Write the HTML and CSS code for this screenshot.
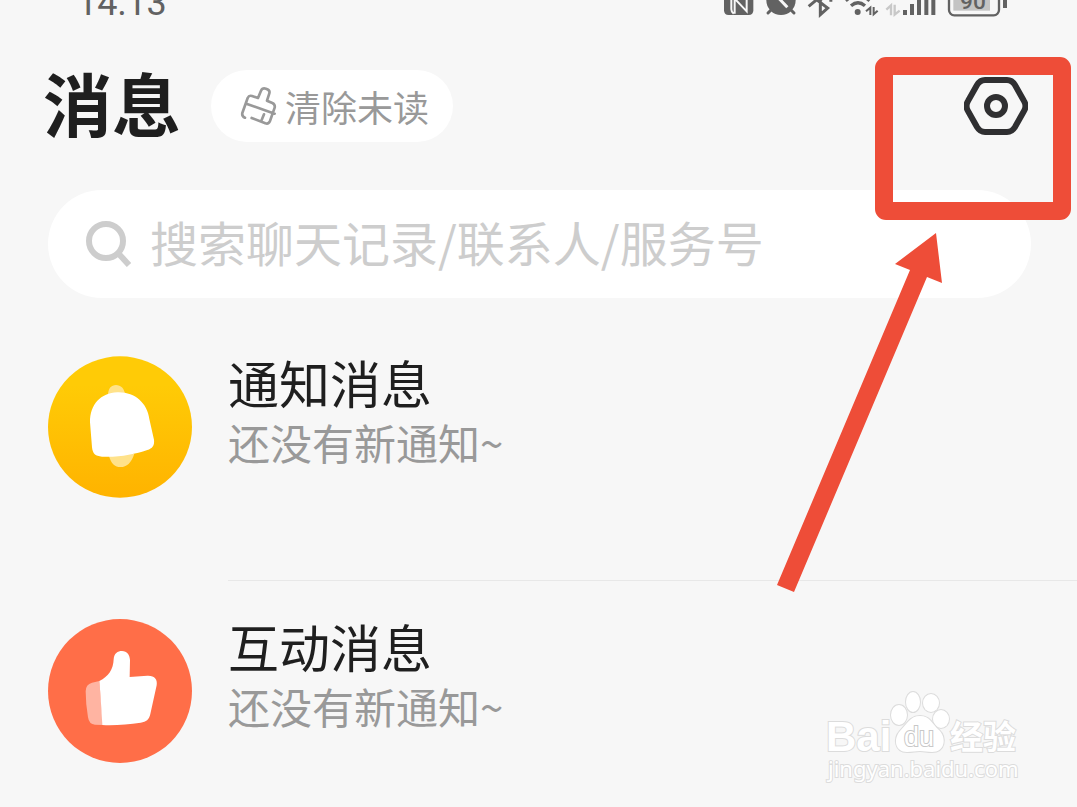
FILE: index.html
```html
<!DOCTYPE html>
<html lang="zh-CN">

<head>
    <meta charset="UTF-8">
    <meta name="viewport" content="width=device-width, initial-scale=1.0">
    <title>消息</title>
    <link rel="stylesheet" href="styles.css">
</head>

<body>
    <div class="status">
        <span class="time">14:13</span>
        <svg class="status-icons" viewBox="0 0 960 63" aria-hidden="true">
            <!-- nfc -->
            <path d="M72-20h88v51q0 14-14 14H86q-14 0-14-14z" fill="#626262" />
            <path d="M94-20V28q0 8 7 13M104 41V-4l36 38V-20" fill="none" stroke="#f7f7f7" stroke-width="6" />
            <!-- alarm -->
            <circle cx="243" cy="1" r="44" fill="#626262" />
            <path d="M232-10l30 32" stroke="#f7f7f7" stroke-width="9" />
            <path d="M213 30l-9 9M273 30l9 9" stroke="#626262" stroke-width="9" stroke-linecap="round" />
            <!-- bluetooth -->
            <path d="M326 19l34-28M335-12l48 36-22 20V0l30-26M388 1h9" fill="none" stroke="#626262" stroke-width="9" />
            <!-- wifi -->
            <circle cx="473" cy="36" r="9" fill="#626262" />
            <path d="M453 17q21-18 42 0M437 2q36-31 72 0" fill="none" stroke="#626262" stroke-width="10" />
            <path d="M511 45V23l-13 11M521 21v22l12-11" fill="none" stroke="#626262" stroke-width="6" />
            <!-- signal -->
            <path d="M573 46V16l-14 13M584 14v30l15-12" fill="none" stroke="#c8c8c8" stroke-width="7" />
            <path d="M615 30v15M636 12v33M657-10v55M679-10v55M700-10v55" stroke="#626262" stroke-width="12" />
            <!-- battery -->
            <rect x="747" y="-35" width="150" height="81" rx="16" fill="none" stroke="#626262" stroke-width="7" />
            <rect x="760" y="-25" width="110" height="57" fill="#c4c4c4" />
            <path d="M915-20V24" stroke="#626262" stroke-width="12" />
            <text x="780" y="26" class="battery">90</text>
        </svg>
    </div>

    <header>
        <h1>消息</h1>
        <button type="button" class="clear">
            <svg viewBox="12 12 114 120" aria-hidden="true">
                <path d="M30 107q-10-4-8-14l16-45q4-9 13-6l18 6 9-22q4-9 15-6 13 4 10 14l-7 22 16 7q9 4 7 14l-14 40q-4 10-14 7l-41-16M34 65l85 30M87 97l-7 17" />
            </svg>
            清除未读
        </button>
        <button type="button" class="settings" aria-label="设置">
            <svg viewBox="0 0 64 60" aria-hidden="true">
                <path d="M21 4h22q5 0 8 5l9 16q3 5 0 10l-9 16q-3 5-8 5H21q-5 0-8-5L4 35q-3-5 0-10L13 9q3-5 8-5z" />
                <circle cx="32" cy="30" r="9" />
            </svg>
        </button>
    </header>

    <label class="search">
        <svg viewBox="0 0 46 46" aria-hidden="true">
            <circle cx="20" cy="20" r="17" />
            <path d="M32 32l11 12" />
        </svg>
        <input type="text" placeholder="搜索聊天记录/联系人/服务号" aria-label="搜索">
    </label>

    <ul class="list">
        <li>
            <svg class="avatar" viewBox="54 46 432 432" aria-hidden="true">
                <defs>
                    <linearGradient id="gold" x1="0" y1="0" x2="0" y2="1">
                        <stop offset="0.2" stop-color="#ffcb06" />
                        <stop offset="1" stop-color="#ffb300" />
                    </linearGradient>
                </defs>
                <ellipse cx="270" cy="262" rx="216" ry="212" fill="url(#gold)" />
                <path d="M234 168c0-22 10-32 24-32s26 10 28 32zM236 345c6 26 18 37 36 37s32-12 41-40z" fill="#ffe28a" />
                <path d="M180 248c0-54 32-88 82-90 52-2 90 32 96 80l14 62c2 18-5 26-20 31-38 13-82 22-136 20-20-1-28-9-30-28z" fill="#fff" />
            </svg>
            <div class="content">
                <h2>通知消息</h2>
                <p>还没有新通知~</p>
            </div>
        </li>
        <li>
            <svg class="avatar" viewBox="54 56 432 432" aria-hidden="true">
                <circle cx="270" cy="272" r="216" fill="#ff6e48" />
                <path d="M208 242l-22 5q-19 5-19 26 0 36 7 78 3 21 21 22l24 1z" fill="#ffb4a2" />
                <path d="M208 242c28-13 42-35 43-65 1-18 12-25 25-25 15 0 23 11 24 27l-1 51 53-4c22-1 31 11 28 29l-19 86c-4 17-12 24-29 26-38 5-76 9-115 7-3-45-5-88-9-132z" fill="#fff" />
            </svg>
            <div class="content">
                <h2>互动消息</h2>
                <p>还没有新通知~</p>
            </div>
        </li>
    </ul>

    <!-- red frame and arrow over the settings button -->
    <svg class="pointer" viewBox="777 57 294 536" aria-hidden="true">
        <rect x="884" y="66" width="178" height="145" rx="2" fill="none" stroke="#ee4d38" stroke-width="18" stroke-linejoin="round" />
        <path d="M936 233l6 50-15-6-133 315-17-7 133-315-15-6z" fill="#ee4d38" />
    </svg>

    <svg class="watermark" viewBox="820 685 204 102">
        <text x="826" y="751" class="latin">Bai</text>
        <ellipse cx="899" cy="715" rx="8" ry="10" />
        <ellipse cx="913" cy="702" rx="7" ry="10" />
        <ellipse cx="931" cy="703" rx="8" ry="9" />
        <ellipse cx="941" cy="719" rx="8" ry="9" />
        <path d="M920 716c10 0 12 8 19 14 8 8 6 22-7 22-5 0-8-1-12-1s-8 1-13 1c-12 0-14-13-7-21 7-7 10-15 20-15z" />
        <text x="904" y="746" class="du">du</text>
        <text x="950" y="749" class="cjk">经验</text>
        <text x="828" y="777" class="url">jingyan.baidu.com</text>
    </svg>
</body>

</html>
```
FILE: styles.css
```css
* {
    box-sizing: border-box;
    margin: 0;
    padding: 0;
}

body {
    position: relative;
    min-height: 100vh;
    background-color: #f7f7f7;
    color: #1f1f1f;
    font-family: "Noto Sans CJK SC", sans-serif;
}

button,
input {
    border: none;
    background: none;
    font-family: inherit;
}

.status {
    display: flex;
    justify-content: space-between;
    align-items: flex-end;
    height: 21px;
    padding: 0 57px 0 77px;
    overflow: hidden;
    color: #626262;
}

.time {
    font-family: Roboto, sans-serif;
    font-size: 36px;
    line-height: 36px;
}

.status-icons {
    width: 320px;
    height: 21px;
}

.battery {
    font-family: Roboto, sans-serif;
    font-size: 68px;
    font-weight: 500;
    fill: #626262;
}

header {
    display: flex;
    align-items: center;
    gap: 30px;
    padding: 49px 49px 0 43px;
}

h1 {
    padding-bottom: 8px;
    font-size: 69px;
    line-height: 64px;
    font-weight: 700;
}

.clear {
    display: flex;
    align-items: center;
    gap: 8px;
    padding: 0 24px 0 28px;
    border-radius: 36px;
    background-color: white;
    color: #999;
    font-size: 36px;
    line-height: 72px;
}

.clear svg {
    width: 38px;
    height: 40px;
    fill: none;
    stroke: #999;
    stroke-width: 8;
    stroke-linecap: round;
    stroke-linejoin: round;
}

.settings {
    margin-left: auto;
}

.settings svg {
    display: block;
    width: 64px;
    height: 60px;
    fill: none;
    stroke: #2f2f31;
    stroke-width: 6;
}

.search {
    display: flex;
    align-items: center;
    gap: 18px;
    height: 108px;
    margin: 48px 46px 0 48px;
    padding: 0 38px;
    border-radius: 54px;
    background-color: white;
}

.search svg {
    width: 46px;
    height: 46px;
    fill: none;
    stroke: #cdcdcd;
    stroke-width: 6;
}

.search input {
    flex: 1;
    min-width: 0;
    padding-bottom: 6px;
    font-size: 48px;
    outline: none;
}

.search input::placeholder {
    color: #cdcdcd;
}

.list {
    list-style: none;
    padding: 19px 0 0 48px;
}

.list li {
    display: flex;
    gap: 36px;
}

.avatar {
    width: 144px;
    height: 144px;
    margin-top: 38px;
}

.content {
    flex: 1;
    padding: 35px 0 108px;
    border-bottom: 1px solid #e8e8e8;
}

.list li:last-child .content {
    padding-bottom: 0;
    border-bottom: none;
}

h2 {
    font-size: 51px;
    line-height: 60px;
    font-weight: 400;
}

.content p {
    color: #999;
    font-size: 42px;
    line-height: 60px;
}

.pointer {
    position: absolute;
    top: 57px;
    right: 6px;
    width: 294px;
    height: 536px;
    pointer-events: none;
}

.watermark {
    position: absolute;
    top: 685px;
    right: 53px;
    width: 204px;
    height: 102px;
    fill: white;
    stroke: #dcdcdc;
    stroke-width: 2;
    paint-order: stroke;
}

.latin {
    font-family: "Liberation Sans", sans-serif;
    font-size: 42px;
    font-weight: 700;
}

.du {
    font-family: "Liberation Sans", sans-serif;
    font-size: 27px;
    stroke: #c8c8c8;
}

.cjk {
    font-size: 33px;
    font-weight: 700;
}

.url {
    font-family: "Noto Sans", sans-serif;
    font-size: 22px;
}
```
